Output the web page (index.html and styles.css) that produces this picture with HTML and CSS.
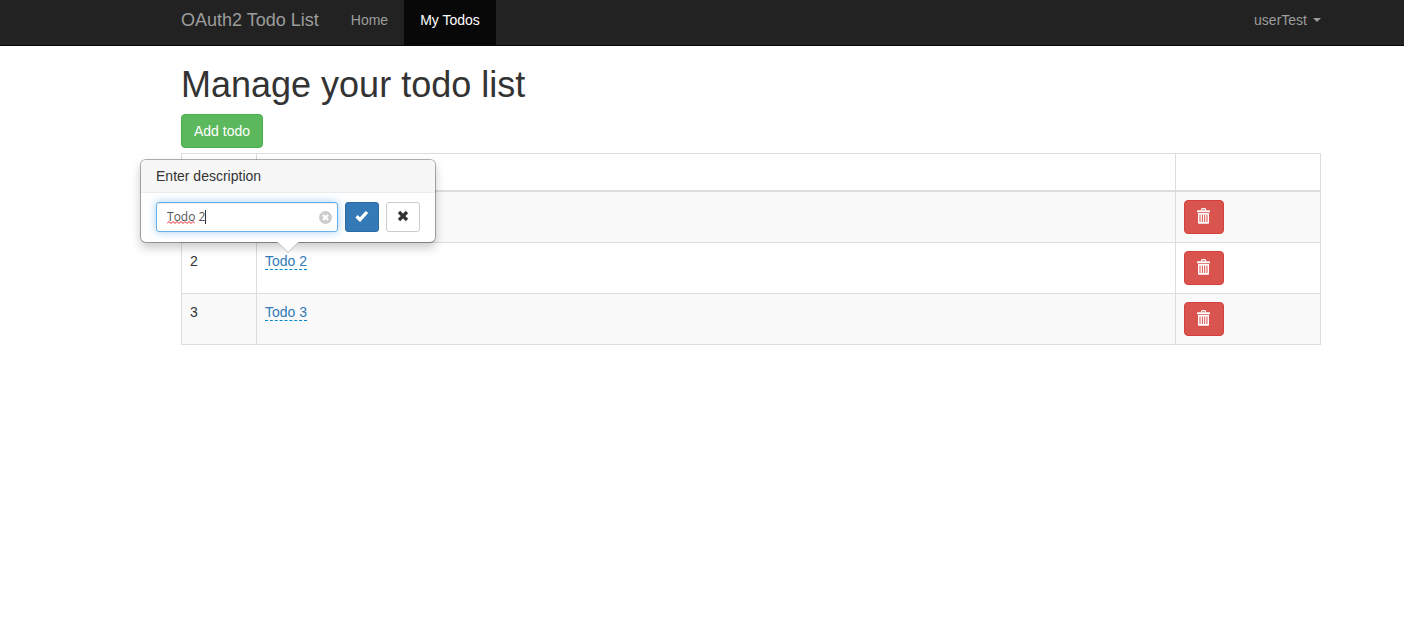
FILE: index.html
```html
<!DOCTYPE html>
<html lang="en">
<head>
<meta charset="utf-8">
<title>OAuth2 Todo List</title>
<link rel="stylesheet" href="styles.css">
</head>
<body>
<svg class="sprite" aria-hidden="true">
  <symbol id="trash" viewBox="0 0 14 16">
    <path fill="none" stroke="currentColor" stroke-width="1.2" d="M4.6 2.6V1.3Q4.6.7 5.2.7h2.6q.6 0 .6.6v1.3"/>
    <path fill="currentColor" d="M0 3q0-.8.8-.8h11.400q.8 0 .8.8v1.200H0z"/>
    <path fill="currentColor" fill-rule="evenodd" d="M1 5h11v10q0 .8-.8.8H1.800Q1 15.800 1 15zM2.500 6.500v7.500h1V6.500zM4.900 6.500v7.500h1V6.500zM7.200 6.500v7.500h1V6.500zM9.500 6.500v7.500h1V6.500z"/>
  </symbol>
</svg>
<nav class="navbar">
  <a class="brand" href="#">OAuth2 Todo List</a>
  <a class="nav-link" href="#">Home</a>
  <a class="nav-link active" href="#">My Todos</a>
  <a class="nav-link user" href="#">userTest <span class="caret"></span></a>
</nav>
<main class="content">
  <h1>Manage your todo list</h1>
  <button class="btn btn-success" type="button">Add todo</button>
  <table class="todos">
    <colgroup><col class="col-id"><col><col class="col-actions"></colgroup>
    <thead>
      <tr><th></th><th></th><th></th></tr>
    </thead>
    <tbody>
      <tr>
        <td></td><td></td>
        <td><button class="btn btn-danger" type="button" aria-label="Delete"><svg class="trash"><use href="#trash"/></svg></button></td>
      </tr>
      <tr>
        <td>2</td>
        <td>
          <span class="anchor">
            <a class="editable" href="#">Todo 2</a>
            <form class="popover">
              <label class="popover-title" for="description">Enter description</label>
              <div class="popover-body">
                <div class="field">
                  <input id="description" type="text" value="Todo 2" autocomplete="off" spellcheck="false">
                  <svg class="squiggle" width="28" height="3" viewBox="0 0 28 3" aria-hidden="true"><path d="M0 2.500l2-2 2 2 2-2 2 2 2-2 2 2 2-2 2 2 2-2 2 2 2-2 2 2 2-2 2 2" fill="none" stroke="#e8262a"/></svg>
                  <span class="cursor"></span>
                  <button class="clear" type="button" aria-label="Clear">
                    <svg width="13" height="13" viewBox="0 0 13 13"><circle cx="6.500" cy="6.500" r="6.500" fill="#ccc"/><path d="M4 4l5 5M9 4l-5 5" stroke="#fff" stroke-width="2.300"/></svg>
                  </button>
                </div>
                <button class="btn-small btn-primary" type="submit" aria-label="Save">
                  <svg width="14" height="12" viewBox="0 0 14 12"><path d="M1.500 6.300l3.500 3.400 7-7.700" fill="none" stroke="currentColor" stroke-width="3.300"/></svg>
                </button>
                <button class="btn-small btn-default" type="button" aria-label="Cancel">
                  <svg width="12" height="12" viewBox="0 0 12 12"><path d="M2 2l8 8M10 2l-8 8" fill="none" stroke="currentColor" stroke-width="3.200"/></svg>
                </button>
              </div>
              <svg class="arrow" width="22" height="11" viewBox="0 0 22 11" aria-hidden="true"><path d="M0 0h22L11 11z" fill="#bbb"/><path d="M1 0h20L11 10z" fill="#fff"/></svg>
            </form>
          </span>
        </td>
        <td><button class="btn btn-danger" type="button" aria-label="Delete"><svg class="trash"><use href="#trash"/></svg></button></td>
      </tr>
      <tr>
        <td>3</td>
        <td><a class="editable" href="#">Todo 3</a></td>
        <td><button class="btn btn-danger" type="button" aria-label="Delete"><svg class="trash"><use href="#trash"/></svg></button></td>
      </tr>
    </tbody>
  </table>
</main>
</body>
</html>
```

FILE: styles.css
```css
* { box-sizing: border-box; }
body {
  margin: 0;
  font: 14px/20px "Liberation Sans", Arial, sans-serif;
  color: #333;
  background: #fff;
}
button, input { font: inherit; }
a { text-decoration: none; }
svg { display: block; }
.sprite { position: absolute; width: 0; height: 0; }

.navbar {
  display: flex;
  padding: 0 83px 0 181px;
  background: #222;
  border-bottom: 1px solid #080808;
}
.brand {
  padding: 10px 16px 15px 0;
  font-size: 18px;
  color: #9d9d9d;
}
.nav-link { padding: 10px 16px 15px; color: #9d9d9d; }
.nav-link.active { color: #fff; background: #080808; }
.nav-link.user {
  display: flex;
  align-items: center;
  gap: 6px;
  margin-left: auto;
  padding-right: 0;
}
.caret {
  border: 4px solid transparent;
  border-top-color: currentColor;
  border-bottom: 0;
}

.content { padding: 19px 83px 20px 181px; }
h1 {
  margin: 0 0 9px;
  font-size: 36px;
  font-weight: 400;
  line-height: 40px;
}
.btn {
  display: block;
  padding: 6px 12px;
  border: 1px solid;
  border-radius: 4px;
  color: #fff;
}
.btn-success { background: #5cb85c; border-color: #4cae4c; }
.btn-danger {
  height: 34px;
  background: #d9534f;
  border-color: #d43f3a;
  padding: 7px 12px 9px;
}
.btn-danger svg { color: #fff; }
.trash { width: 14px; height: 16px; }

.todos {
  width: 100%;
  margin-top: 5px;
  table-layout: fixed;
  border-collapse: collapse;
}
.col-id { width: 75px; }
.col-actions { width: 145px; }
.todos th, .todos td {
  padding: 8px;
  border: 1px solid #ddd;
  vertical-align: top;
}
.todos th { height: 37px; border-bottom-width: 2px; }
.todos tbody tr:nth-child(odd) { background: #f9f9f9; }

.anchor { position: relative; display: inline-block; }
.editable { color: #337ab7; border-bottom: 1px dashed #08c; }

.popover {
  position: absolute;
  bottom: 100%;
  left: 50%;
  width: 296px;
  margin: 0 0 8px -146px;
  background: #fff;
  border: 1px solid rgba(0, 0, 0, 0.3);
  background-clip: padding-box;
  border-radius: 6px;
  box-shadow: 0 5px 10px rgba(0, 0, 0, 0.2);
}
.popover-title {
  display: block;
  padding: 6px 15px;
  background: #f7f7f7;
  border-bottom: 1px solid #ebebeb;
  border-radius: 5px 5px 0 0;
}
.popover-body { display: flex; gap: 7px; padding: 9px 15px 10px; }
.field { position: relative; flex: 1; }
.field input {
  display: block;
  width: 100%;
  height: 30px;
  padding: 5px 24px 5px 10px;
  border: 1px solid #66afe9;
  border-radius: 3px;
  outline: 0;
  font: 12px/18px "Open Sans", sans-serif;
  color: #555;
  box-shadow: inset 0 1px 1px rgba(0, 0, 0, 0.075), 0 0 8px rgba(102, 175, 233, 0.6);
}
.squiggle { position: absolute; left: 11px; top: 19px; }
.cursor {
  position: absolute;
  left: 49px;
  top: 8px;
  width: 1px;
  height: 14px;
  background: #333;
}
.clear {
  position: absolute;
  right: 6px;
  top: 9px;
  padding: 0;
  border: 0;
  background: none;
}
.btn-small {
  display: flex;
  align-items: center;
  justify-content: center;
  width: 34px;
  height: 30px;
  padding: 0 0 2px;
  border: 1px solid;
  border-radius: 3px;
}
.btn-primary { color: #fff; background: #337ab7; border-color: #2e6da4; }
.btn-default { color: #333; background: #fff; border-color: #ccc; }
.arrow { position: absolute; top: 100%; left: 50%; margin-left: -11px; }
```
